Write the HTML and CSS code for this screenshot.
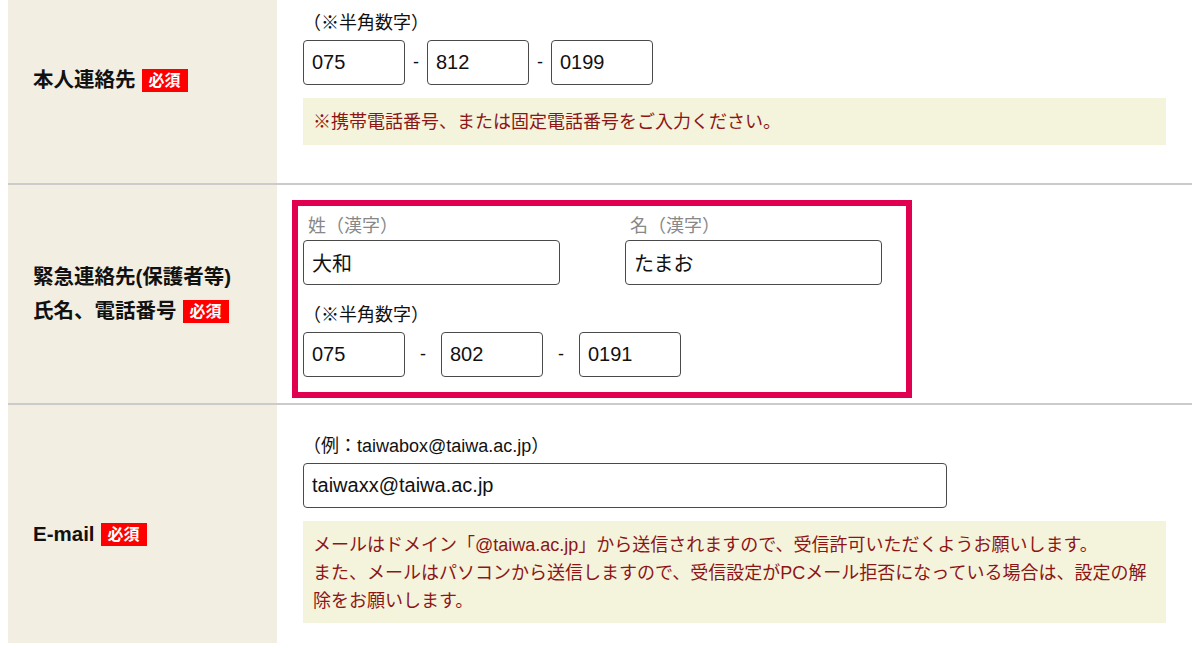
FILE: index.html
```
<!DOCTYPE html>
<html lang="ja">
<head>
    <meta charset="UTF-8">
    <meta name="viewport" content="width=device-width, initial-scale=1.0">
    <title>入力フォーム</title>
    <link rel="stylesheet" href="styles.css">
</head>
<body>
    <div class="form-table">
        <div class="form-row">
            <div class="form-label">
                <p>本人連絡先<span class="req">必須</span></p>
            </div>
            <div class="form-field">
                <p class="field-note">（※半角数字）</p>
                <div class="tel-group">
                    <input class="input tel" type="text" value="075">
                    <span class="dash">-</span>
                    <input class="input tel" type="text" value="812">
                    <span class="dash">-</span>
                    <input class="input tel" type="text" value="0199">
                </div>
                <p class="notice">※携帯電話番号、または固定電話番号をご入力ください。</p>
            </div>
        </div>

        <div class="form-row">
            <div class="form-label">
                <p>緊急連絡先(保護者等)<br>氏名、電話番号<span class="req">必須</span></p>
            </div>
            <div class="form-field form-field--boxed">
                <div class="highlight-box">
                    <div class="name-group">
                        <label class="name-item">
                            <span class="name-caption">姓（漢字）</span>
                            <input class="input" type="text" value="大和">
                        </label>
                        <label class="name-item">
                            <span class="name-caption">名（漢字）</span>
                            <input class="input" type="text" value="たまお">
                        </label>
                    </div>
                    <p class="field-note field-note--spaced">（※半角数字）</p>
                    <div class="tel-group tel-group--wide">
                        <input class="input tel" type="text" value="075">
                        <span class="dash">-</span>
                        <input class="input tel" type="text" value="802">
                        <span class="dash">-</span>
                        <input class="input tel" type="text" value="0191">
                    </div>
                </div>
            </div>
        </div>

        <div class="form-row form-row--last">
            <div class="form-label">
                <p>E-mail<span class="req">必須</span></p>
            </div>
            <div class="form-field form-field--mail">
                <p class="field-note">（例：taiwabox@taiwa.ac.jp）</p>
                <input class="input mail" type="text" value="taiwaxx@taiwa.ac.jp">
                <p class="notice">メールはドメイン「@taiwa.ac.jp」から送信されますので、受信許可いただくようお願いします。<br>また、メールはパソコンから送信しますので、受信設定がPCメール拒否になっている場合は、設定の解除をお願いします。</p>
            </div>
        </div>
    </div>
</body>
</html>
```

FILE: styles.css
```
body {
    margin: 0 8px;
    font-family: "Liberation Sans", "Noto Sans CJK JP", sans-serif;
    color: #111;
    background: #fff;
}
p {
    margin: 0;
}
.form-table {
    margin-top: -23px;
}
.form-row {
    display: grid;
    grid-template-columns: 269px 1fr;
    border-bottom: 2px solid #cbcbcb;
}
.form-row--last {
    border-bottom: none;
}
.form-label {
    background: #f3eee2;
    display: flex;
    align-items: center;
    padding-left: 25px;
}
.form-label p {
    font-size: 20.5px;
    font-weight: bold;
    line-height: 34px;
}
.form-row--last .form-label {
    padding-top: 20px;
}
.req {
    display: inline-block;
    margin-left: 6px;
    padding: 0 7px;
    background: #f00;
    color: #fff;
    font-size: 16px;
    line-height: 23px;
    vertical-align: 1px;
}
.form-field {
    padding: 33px 26px 38px;
}
.form-field--boxed {
    padding: 15px 26px 5px 15px;
}
.form-field--mail {
    padding: 28px 26px 20px;
}
.field-note {
    font-size: 18px;
    line-height: 26px;
    margin-bottom: 4px;
}
.field-note--spaced {
    margin-top: 17px;
}
.input {
    box-sizing: border-box;
    height: 45px;
    padding: 0 8px;
    border: 1px solid #4a4a4a;
    border-radius: 4px;
    font: inherit;
    font-size: 20px;
    color: #111;
    background: #fff;
}
.tel-group {
    display: flex;
    align-items: center;
    gap: 8px;
}
.tel-group--wide {
    gap: 15px;
}
.tel {
    width: 102px;
}
.dash {
    font-size: 18px;
}
.mail {
    display: block;
    width: 644px;
}
.notice {
    margin-top: 13px;
    padding: 10px 10px 9px;
    background: #f4f3dc;
    color: #8c1616;
    font-size: 18px;
    line-height: 28px;
}
.form-field--mail .notice {
    padding-bottom: 8px;
}
.highlight-box {
    width: fit-content;
    border: 6px solid #e0004f;
    padding: 8px 24px 15px 5px;
}
.name-group {
    display: flex;
    gap: 65px;
}
.name-item {
    display: flex;
    flex-direction: column;
}
.name-item .input {
    width: 257px;
}
.name-caption {
    padding-left: 5px;
    color: #888;
    font-size: 18px;
    line-height: 24px;
    margin-bottom: 2px;
}
```
